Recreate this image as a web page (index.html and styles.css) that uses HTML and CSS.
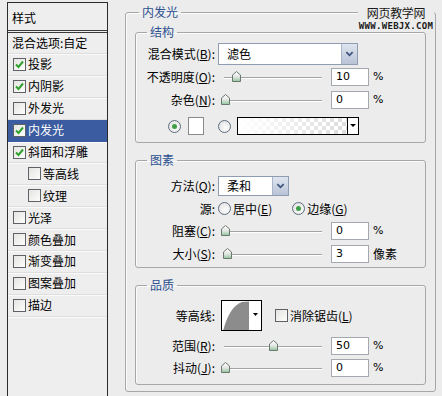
FILE: index.html
```html
<!DOCTYPE html>
<html lang="zh-CN">
<head>
    <meta charset="UTF-8">
    <title>图层样式 - 内发光</title>
    <link rel="stylesheet" href="styles.css">
</head>
<body>
    <svg class="defs" width="0" height="0">
        <defs>
            <linearGradient id="knob-fill" x1="0" y1="0" x2="0" y2="1">
                <stop offset="0" stop-color="#ffffff"/>
                <stop offset="0.55" stop-color="#e2e4e2"/>
                <stop offset="1" stop-color="#8cc69a"/>
            </linearGradient>
        </defs>
    </svg>

    <div class="dialog">
        <!-- 左边的样式列表 -->
        <aside class="styles-list">
            <div class="list-head">样式</div>
            <div class="list-item">混合选项:自定</div>
            <div class="list-item"><span class="cb"><svg viewBox="0 0 11 11"><path d="M2 5.5 L4.5 8 L9 2.5"/></svg></span>投影</div>
            <div class="list-item"><span class="cb"><svg viewBox="0 0 11 11"><path d="M2 5.5 L4.5 8 L9 2.5"/></svg></span>内阴影</div>
            <div class="list-item"><span class="cb"></span>外发光</div>
            <div class="list-item active"><span class="cb"><svg viewBox="0 0 11 11"><path d="M2 5.5 L4.5 8 L9 2.5"/></svg></span>内发光</div>
            <div class="list-item"><span class="cb"><svg viewBox="0 0 11 11"><path d="M2 5.5 L4.5 8 L9 2.5"/></svg></span>斜面和浮雕</div>
            <div class="list-item sub"><span class="cb"></span>等高线</div>
            <div class="list-item sub"><span class="cb"></span>纹理</div>
            <div class="list-item"><span class="cb"></span>光泽</div>
            <div class="list-item"><span class="cb"></span>颜色叠加</div>
            <div class="list-item"><span class="cb"></span>渐变叠加</div>
            <div class="list-item"><span class="cb"></span>图案叠加</div>
            <div class="list-item"><span class="cb"></span>描边</div>
        </aside>

        <section class="panel">
            <fieldset class="outer">
                <legend>内发光</legend>

                <fieldset class="group structure">
                    <legend>结构</legend>
                    <div class="row sel-row">
                        <span class="lbl">混合模式(<u>B</u>):</span>
                        <div class="sel wide">
                            <span class="sel-txt">滤色</span>
                            <span class="sel-btn"><svg viewBox="0 0 10 6"><path d="M1.5 1 L5 4.5 L8.5 1"/></svg></span>
                        </div>
                    </div>
                    <div class="row">
                        <span class="lbl">不透明度(<u>O</u>):</span>
                        <div class="slider"><svg class="knob" style="left:11px" viewBox="0 0 9 11"><path d="M4.5 0.5 L8.5 4 V10.5 H0.5 V4 Z"/></svg></div>
                        <span class="num">10</span><span class="unit">%</span>
                    </div>
                    <div class="row">
                        <span class="lbl">杂色(<u>N</u>):</span>
                        <div class="slider"><svg class="knob" style="left:0px" viewBox="0 0 9 11"><path d="M4.5 0.5 L8.5 4 V10.5 H0.5 V4 Z"/></svg></div>
                        <span class="num">0</span><span class="unit">%</span>
                    </div>
                    <div class="row color-row">
                        <span class="radio on"></span>
                        <span class="swatch"></span>
                        <span class="radio gap"></span>
                        <span class="gradient"><span class="grad-arrow"></span></span>
                    </div>
                </fieldset>

                <fieldset class="group elements">
                    <legend>图素</legend>
                    <div class="row r-method">
                        <span class="lbl">方法(<u>Q</u>):</span>
                        <div class="sel short">
                            <span class="sel-txt">柔和</span>
                            <span class="sel-btn"><svg viewBox="0 0 10 6"><path d="M1.5 1 L5 4.5 L8.5 1"/></svg></span>
                        </div>
                    </div>
                    <div class="row r-source">
                        <span class="lbl">源:</span>
                        <span class="radio"></span><span class="rt">居中(<u>E</u>)</span>
                        <span class="radio on second"></span><span class="rt">边缘(<u>G</u>)</span>
                    </div>
                    <div class="row r-choke">
                        <span class="lbl">阻塞(<u>C</u>):</span>
                        <div class="slider"><svg class="knob" style="left:0px" viewBox="0 0 9 11"><path d="M4.5 0.5 L8.5 4 V10.5 H0.5 V4 Z"/></svg></div>
                        <span class="num">0</span><span class="unit">%</span>
                    </div>
                    <div class="row r-size">
                        <span class="lbl">大小(<u>S</u>):</span>
                        <div class="slider"><svg class="knob" style="left:2px" viewBox="0 0 9 11"><path d="M4.5 0.5 L8.5 4 V10.5 H0.5 V4 Z"/></svg></div>
                        <span class="num">3</span><span class="unit">像素</span>
                    </div>
                </fieldset>

                <fieldset class="group quality">
                    <legend>品质</legend>
                    <div class="row r-contour">
                        <span class="lbl">等高线:</span>
                        <span class="contour">
                            <svg viewBox="0 0 41 31" width="41" height="31">
                                <rect x="0" y="0" width="41" height="31" fill="#fff"/>
                                <path d="M2 31 C6 16 12 5 21 2 L28 1.5 L28 31 Z" fill="#8c8c8c"/>
                                <path d="M32 13 H37 L34.5 16 Z" fill="#000"/>
                                <rect x="0.5" y="0.5" width="40" height="30" fill="none" stroke="#000"/>
                            </svg>
                        </span>
                        <span class="cb plain"></span><span class="rt">消除锯齿(<u>L</u>)</span>
                    </div>
                    <div class="row r-range">
                        <span class="lbl">范围(<u>R</u>):</span>
                        <div class="slider"><svg class="knob" style="left:48px" viewBox="0 0 9 11"><path d="M4.5 0.5 L8.5 4 V10.5 H0.5 V4 Z"/></svg></div>
                        <span class="num">50</span><span class="unit">%</span>
                    </div>
                    <div class="row r-jitter">
                        <span class="lbl">抖动(<u>J</u>):</span>
                        <div class="slider"><svg class="knob" style="left:0px" viewBox="0 0 9 11"><path d="M4.5 0.5 L8.5 4 V10.5 H0.5 V4 Z"/></svg></div>
                        <span class="num">0</span><span class="unit">%</span>
                    </div>
                </fieldset>
            </fieldset>
        </section>

        <div class="watermark">
            <span class="wm-cn">网页教学网</span>
            <span class="wm-en">WWW.WEBJX.COM</span>
        </div>
    </div>
</body>
</html>
```

FILE: styles.css
```css
body {
    margin: 0;
    background: #ececec;
    font: 12px/14px "Noto Sans CJK SC", "DejaVu Sans", sans-serif;
    color: #000;
}

.defs {
    position: absolute;
}

.dialog {
    position: relative;
    display: flex;
    height: 396px;
    overflow: hidden;
}

/* 样式列表 */
.styles-list {
    box-sizing: border-box;
    width: 101px;
    margin: 2px 0 0 7px;
    border: 1px solid #2b2b2b;
    border-bottom: none;
    background: #eeeeee;
    flex: none;
}

.list-head {
    height: 24px;
    line-height: 24px;
    padding: 3px 0 0 4px;
    border-bottom: 3px double #3a3a3a;
}

.list-item {
    display: flex;
    align-items: center;
    height: 21.9px;
    box-sizing: border-box;
    padding-left: 4px;
    border-bottom: 1px solid #dedede;
    box-shadow: 0 1px 0 #fafafa;
    white-space: nowrap;
}

.list-item:nth-child(2) {
    height: 21px;
}

.list-item .cb {
    margin: 0 2px 0 1px;
}

.list-item.sub .cb {
    margin-left: 16px;
}

.list-item.active {
    background: #3b5ca0;
    color: #fff;
    border-bottom-color: #3b5ca0;
}

.cb {
    box-sizing: border-box;
    width: 13px;
    height: 13px;
    border: 1px solid #5e6266;
    background: linear-gradient(135deg, #e4e4e0, #fdfdfd);
    display: inline-flex;
    align-items: center;
    justify-content: center;
    flex: none;
}

.cb svg {
    width: 11px;
    height: 11px;
}

.cb path {
    fill: none;
    stroke: #2ea12e;
    stroke-width: 2;
}

/* 右边的面板 */
.panel {
    flex: none;
}

fieldset {
    margin: 0;
    padding: 0;
    min-width: 0;
    border: 1px solid #a7a7a7;
    border-radius: 3px;
    box-shadow: inset 1px 1px 0 #fbfbfb;
}

legend {
    padding: 0 3px;
    font-size: 12px;
    line-height: 14px;
    color: #2d5190;
}

.outer {
    box-sizing: border-box;
    width: 311px;
    margin: 5px 0 0 17px;
    padding: 0 9px 6px;
}

.outer > legend {
    margin-left: 4px;
}

.group > legend {
    margin-left: 11px;
}

.structure {
    margin-top: 6px;
    padding-bottom: 1px;
}

.elements {
    margin-top: 10px;
    padding: 7px 0 1px;
}

.quality {
    margin-top: 10px;
    padding: 5px 0 6px;
}

.row {
    display: flex;
    align-items: center;
    height: 23px;
    white-space: nowrap;
}

.lbl {
    width: 79px;
    flex: none;
    text-align: right;
}

u {
    text-decoration: underline;
    text-underline-offset: 1px;
}

.sel-row {
    height: 22px;
    margin-top: 4px;
}

.color-row {
    height: 30px;
    padding-left: 32px;
}

.r-method { height: 23px; }
.r-source { height: 23px; }
.r-choke { height: 22px; }
.r-size { height: 24px; }
.r-contour { height: 37px; }
.r-range { height: 24px; }
.r-jitter { height: 20px; }

/* 下拉框 */
.sel {
    box-sizing: border-box;
    display: flex;
    margin-left: 3px;
    border: 1px solid #8f9db3;
    background: #fff;
}

.sel.wide {
    width: 140px;
    height: 22px;
}

.sel.short {
    width: 71px;
    height: 20px;
}

.sel-txt {
    flex: 1;
    padding-left: 8px;
    align-self: center;
}

.sel-btn {
    width: 15px;
    margin: 0;
    background: linear-gradient(#dfe5ef, #b8c3d6);
    border-left: 1px solid #a9b5ca;
    display: flex;
    align-items: center;
    justify-content: center;
}

.sel-btn svg {
    width: 9px;
    height: 6px;
}

.sel-btn path {
    fill: none;
    stroke: #3f5580;
    stroke-width: 2;
}

/* 滑块 */
.slider {
    position: relative;
    width: 101px;
    height: 12px;
    margin-left: 6px;
    flex: none;
}

.slider::before {
    content: "";
    position: absolute;
    left: 3px;
    right: 0;
    top: 6px;
    height: 1px;
    background: #a3a3a3;
    box-shadow: 0 1px 0 #fff;
}

.knob {
    position: absolute;
    top: 0;
    width: 9px;
    height: 11px;
}

.knob path {
    fill: url(#knob-fill);
    stroke: #6a786d;
    stroke-width: 1;
}

.num {
    box-sizing: border-box;
    width: 38px;
    height: 18px;
    margin-left: 9px;
    padding-left: 4px;
    border: 1px solid #a4a9b0;
    background: #fff;
    font: 11px/16px "DejaVu Sans", sans-serif;
}

.unit {
    margin-left: 4px;
    font-family: "DejaVu Sans", "Noto Sans CJK SC", sans-serif;
    font-size: 11px;
}

.r-size .unit {
    font-family: "Noto Sans CJK SC", sans-serif;
    font-size: 12px;
}

/* 单选 */
.radio {
    box-sizing: border-box;
    width: 13px;
    height: 13px;
    border: 1px solid #5d6e80;
    border-radius: 50%;
    background: radial-gradient(circle at 60% 60%, #fdfdfd, #dcdcdc);
    display: inline-flex;
    align-items: center;
    justify-content: center;
    flex: none;
}

.radio.on::after {
    content: "";
    width: 5px;
    height: 5px;
    border-radius: 50%;
    background: #3f9f47;
}

.rt {
    margin-left: 2px;
}

.r-source .radio {
    margin-left: 3px;
}

.r-source .radio.second {
    margin-left: 20px;
}

.swatch {
    box-sizing: border-box;
    width: 16px;
    height: 18px;
    margin-left: 7px;
    border: 1px solid #8a8a8a;
    background: #fff;
}

.radio.gap {
    margin-left: 14px;
}

.gradient {
    box-sizing: border-box;
    width: 122px;
    height: 18px;
    margin-left: 6px;
    border: 1px solid #000;
    display: flex;
    justify-content: flex-end;
    background:
        linear-gradient(to right, #fff, rgba(255, 255, 255, 0)),
        repeating-conic-gradient(#d9d9d9 0 25%, #fff 0 50%) 0 0 / 8px 8px;
}

.grad-arrow {
    width: 10px;
    border-left: 1px solid #000;
    background: #fff;
    position: relative;
}

.grad-arrow::after {
    content: "";
    position: absolute;
    left: 2px;
    top: 6px;
    border-left: 3px solid transparent;
    border-right: 3px solid transparent;
    border-top: 3px solid #000;
}

/* 等高线 */
.contour {
    width: 41px;
    height: 31px;
    margin-left: 6px;
    display: block;
}

.contour svg {
    display: block;
}

.cb.plain {
    margin-left: 13px;
}

/* 水印 */
.watermark {
    position: absolute;
    left: 358px;
    top: 5px;
    width: 76px;
    display: flex;
    flex-direction: column;
    align-items: center;
    background: #ececec;
    color: #1a1a1a;
}

.wm-cn {
    font-size: 12px;
    line-height: 16px;
    letter-spacing: -0.3px;
}

.wm-en {
    font: bold 9px/11px "DejaVu Sans Mono", monospace;
    letter-spacing: 0.3px;
}
```
